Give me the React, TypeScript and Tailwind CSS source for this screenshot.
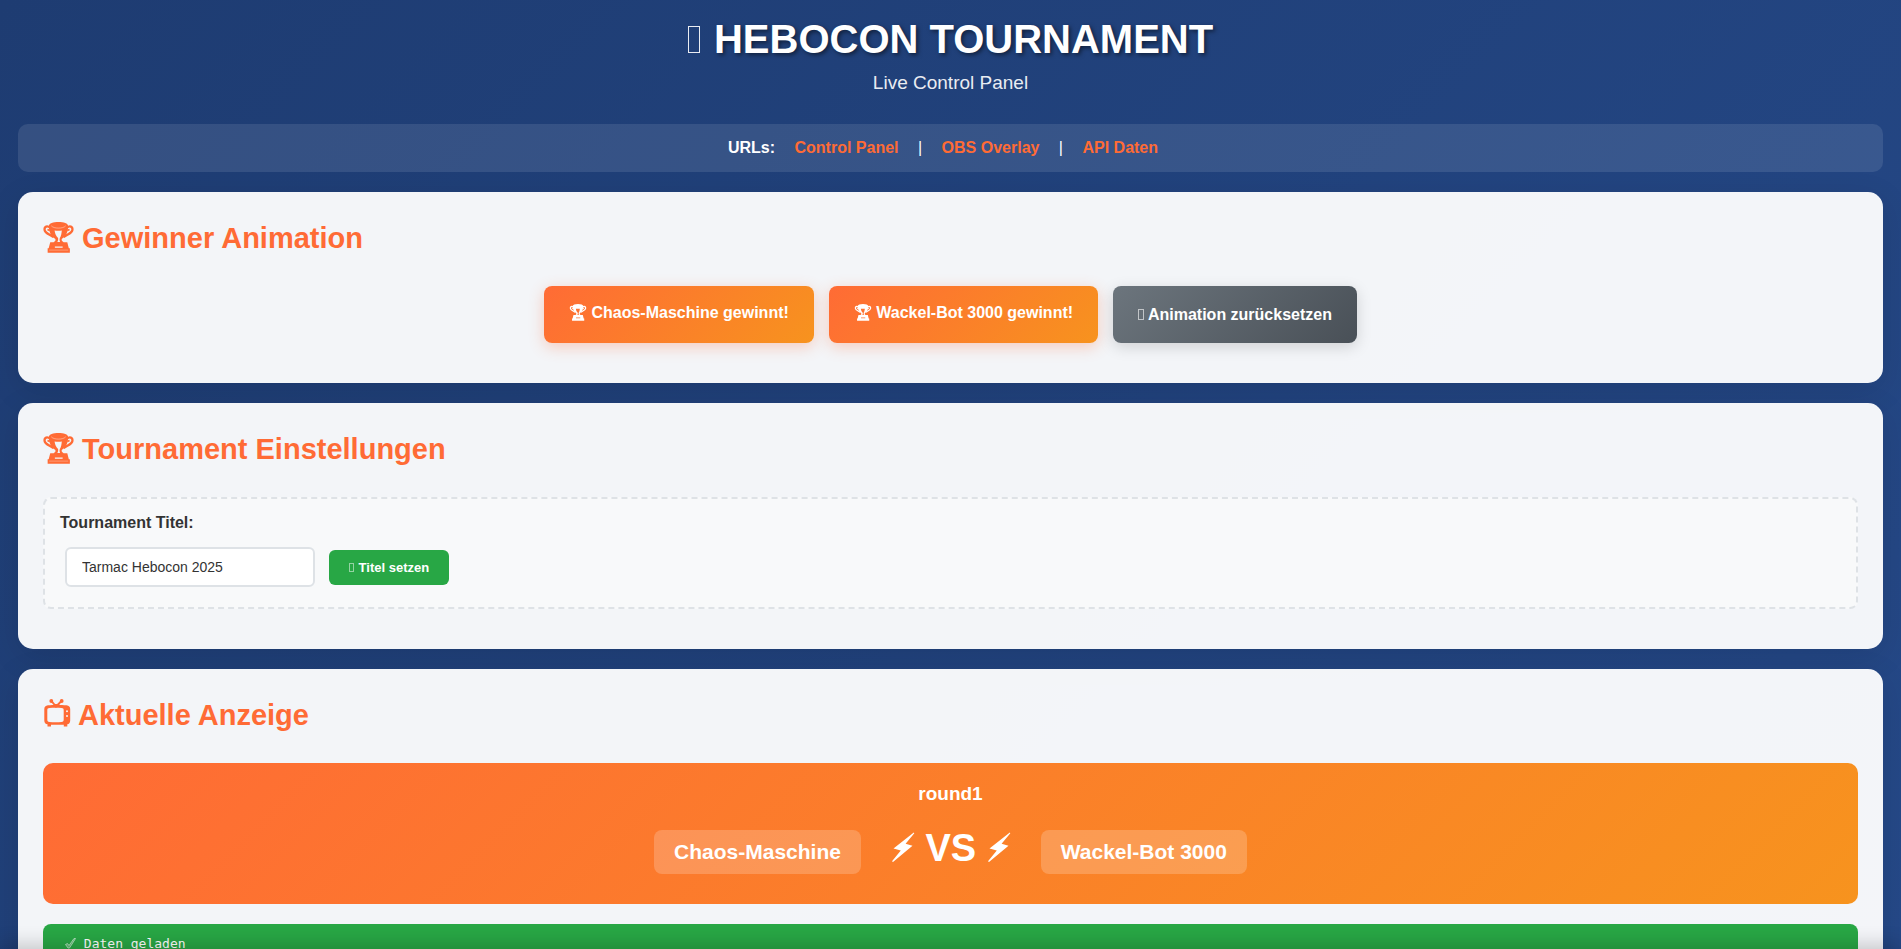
import type { ReactNode } from "react";

function TrophyIcon({ className }: { className: string }) {
  return (
    <svg viewBox="0 0 30 30" fill="none" aria-hidden="true" className={className}>
      <path
        d="M6.800 5.500C4 3.200 1.300 4.500 1.500 7.500C1.900 11 6 11.700 10 14.500M23.200 5.500C26 3.200 28.700 4.500 28.500 7.500C28.100 11 24 11.700 20 14.500"
        stroke="currentColor"
        strokeWidth="2.200"
      />
      <path d="M4.300 7.300L6.500 8.300M25.700 7.300L23.500 8.300" stroke="currentColor" strokeWidth="1.600" />
      <path
        fillRule="evenodd"
        fill="currentColor"
        d="M15 0C20 0 24.300 1.300 24.300 3.600C24.300 9.500 22.600 13.500 18.300 16.200C17.700 17.300 18 18.300 20 19.500H23.500L25 25.500H26V29.700H4.500V25.500H5.500L7 19.500H10.300C12.300 18.300 12.500 17.300 11.700 16.200C7.400 13.500 5.700 9.500 5.700 3.600C5.700 1.300 10 0 15 0ZM11.200 8.200C11.600 11.200 12.700 13.600 14.600 15.500C14.900 17.300 14.500 18.400 13.800 19.300H16.600C15.900 18.300 15.900 16.800 16.300 15.600C17.500 13.800 17.900 11.500 18.200 8.300C16 8.700 13.300 8.700 11.200 8.200ZM11.500 23.800V25H19V23.800Z"
      />
      <path
        d="M8 3.700C9.500 5.300 12 5.900 15 5.900S20.500 5.300 22 3.700"
        stroke="#ffffff"
        strokeOpacity=".55"
        strokeWidth=".7"
      />
      <path d="M6 27.200H24.500" stroke="#ffffff" strokeOpacity=".45" strokeWidth=".7" />
    </svg>
  );
}

function TvIcon({ className }: { className: string }) {
  return (
    <svg viewBox="0 0 28 28" fill="none" aria-hidden="true" className={className}>
      <path d="M8.500 2L13 7.500L18.500 2" stroke="currentColor" strokeWidth="1.900" />
      <circle cx="8.300" cy="2" r="1.900" fill="currentColor" />
      <circle cx="18.700" cy="2" r="1.900" fill="currentColor" />
      <path d="M9.500 7L12 5H15.500L18.500 7Z" fill="currentColor" />
      <path
        fillRule="evenodd"
        fill="currentColor"
        d="M5 6.300C10 5.800 18 5.800 23.500 6.300C26 6.500 27.200 8 27.200 10V21.500C27.200 24 26 25 24.300 25.200V27.500H20.800V25.700H8V27.500H4.500V25.200C2.500 25 1.300 24 1.300 21.500V10C1.300 8 2.500 6.500 5 6.300ZM6.500 9C4.800 9.100 4.300 9.700 4.300 11.500V20.500C4.300 22.300 4.800 22.800 6.500 22.900C10 23.200 15 23.200 18.500 22.900C20.200 22.800 20.700 22.300 20.700 20.500V11.500C20.700 9.700 20.200 9.100 18.500 9C15 8.700 10 8.700 6.500 9Z"
      />
      <circle cx="24" cy="12.300" r="1" fill="#f4f5f9" />
      <circle cx="24" cy="17" r="1" fill="#f4f5f9" />
    </svg>
  );
}

function BoltIcon() {
  return (
    <svg viewBox="0 0 24 30" aria-hidden="true" className="mb-1 inline-block h-[30px] w-6 align-[-5px]">
      <path
        d="M22.800 .5L2.500 16.500L9.800 18.600L1 29.200L2 30L21.500 13.700L14.600 11.800L23.300 1.200Z"
        fill="currentColor"
      />
    </svg>
  );
}

function CheckIcon() {
  return (
    <svg viewBox="0 0 13 12" aria-hidden="true" className="inline-block h-3 w-[13px] align-[-1px] opacity-70">
      <path
        d="M2.500 7.500L4.500 6.500L6 8.500L11 1.500H12.500L6.500 11H5Z"
        fill="#ffffff"
        fillOpacity=".35"
        stroke="#ffffff"
        strokeWidth=".8"
      />
    </svg>
  );
}

/** Narrow hollow box used as a leading symbol. */
function BoxGlyph({ className }: { className: string }) {
  return <span aria-hidden="true" className={`inline-block border-current ${className}`} />;
}

function Card({ icon, title, children }: { icon: ReactNode; title: string; children: ReactNode }) {
  return (
    <section className="mb-5 rounded-[15px] bg-white/95 p-[25px] shadow-[0_8px_32px_rgba(0,0,0,0.1)]">
      <h2 className="mb-5 h-[49px] text-[29px] leading-[42px] font-bold text-[#ff6b35]">
        {icon} {title}
      </h2>
      {children}
    </section>
  );
}

function UrlLink({ href, children }: { href: string; children: ReactNode }) {
  return (
    <a href={href} className="mx-[15px] font-bold text-[#ff6b35]">
      {children}
    </a>
  );
}

function WinnerButton({ name }: { name: string }) {
  return (
    <button
      type="button"
      className="rounded-lg bg-[linear-gradient(135deg,#ff6b35,#f7931e)] px-[25px] pt-[17px] pb-5 text-base leading-5 font-bold text-white shadow-[0_4px_15px_rgba(255,107,53,0.3)]"
    >
      <TrophyIcon className="inline-block h-[17px] w-[18px] align-[-3px]" /> {name} gewinnt!
    </button>
  );
}

function RobotName({ children }: { children: ReactNode }) {
  return (
    <span className="rounded-lg bg-white/20 px-5 py-2.5 text-[21px] leading-6 font-bold">{children}</span>
  );
}

export default function App() {
  return (
    <div className="min-h-screen bg-[#2a5298] bg-[linear-gradient(135deg,#1e3c72,#2a5298)] bg-[length:100%_3000px] bg-no-repeat px-[18px] font-['Liberation_Sans',Arial,sans-serif] text-base text-[#333333]">
      <header className="pt-4 text-center text-white">
        <h1 className="text-[40px] leading-[46px] font-bold [text-shadow:2px_2px_4px_rgba(0,0,0,0.5)]">
          <BoxGlyph className="mr-[3px] h-[27px] w-3 border opacity-90" /> HEBOCON TOURNAMENT
        </h1>
        <p className="mt-2.5 text-[19px] leading-[22px] opacity-90">Live Control Panel</p>
      </header>

      <nav
        aria-label="URLs"
        className="mt-[30px] mb-5 rounded-[10px] bg-white/10 py-3 text-center leading-6 text-white"
      >
        <strong>URLs:</strong> <UrlLink href="#control">Control Panel</UrlLink> |{" "}
        <UrlLink href="#overlay">OBS Overlay</UrlLink> | <UrlLink href="#api">API Daten</UrlLink>
      </nav>

      <main>
        <Card
          icon={<TrophyIcon className="inline-block size-[31px] align-[-5px]" />}
          title="Gewinner Animation"
        >
          <div className="mb-[15px] flex flex-wrap justify-center gap-[15px]">
            <WinnerButton name="Chaos-Maschine" />
            <WinnerButton name="Wackel-Bot 3000" />
            <button
              type="button"
              className="rounded-lg bg-[linear-gradient(135deg,#6c757d,#495057)] px-[25px] text-base leading-5 font-bold text-white shadow-[0_4px_15px_rgba(0,0,0,0.15)]"
            >
              <BoxGlyph className="h-[11px] w-1.5 border opacity-60" /> Animation zurücksetzen
            </button>
          </div>
        </Card>

        <Card
          icon={<TrophyIcon className="inline-block size-[31px] align-[-5px]" />}
          title="Tournament Einstellungen"
        >
          <div className="mb-[15px] rounded-lg border-2 border-dashed border-[#dee2e6] bg-[#f8f9fa] px-[15px] pt-3.5 pb-5">
            <label htmlFor="title" className="block leading-5 font-bold">
              Tournament Titel:
            </label>
            <div className="mt-3.5 flex items-center gap-3.5 px-[5px]">
              <input
                id="title"
                type="text"
                defaultValue="Tarmac Hebocon 2025"
                className="h-10 w-[250px] rounded-md border-2 border-[#dee2e6] bg-white px-[15px] text-sm"
              />
              <button
                type="button"
                className="rounded-md bg-[#28a745] px-5 py-2.5 text-[13px] leading-[15px] font-bold text-white"
              >
                <BoxGlyph className="mr-px h-[9px] w-[5px] border opacity-50" /> Titel setzen
              </button>
            </div>
          </div>
        </Card>

        <Card icon={<TvIcon className="inline-block size-7 align-[-2px]" />} title="Aktuelle Anzeige">
          <div className="mb-5 rounded-[10px] bg-[linear-gradient(135deg,#ff6b35,#f7931e)] px-5 pt-5 pb-[30px] text-center text-white">
            <div className="mb-3 text-[19px] leading-[22px] font-bold">round1</div>
            <div className="flex items-end justify-center gap-[30px] pt-[9px]">
              <RobotName>Chaos-Maschine</RobotName>
              <span className="h-12 text-[38px] leading-[44px] font-bold">
                <BoltIcon /> VS <BoltIcon />
              </span>
              <RobotName>Wackel-Bot 3000</RobotName>
            </div>
          </div>
          <div className="rounded-lg bg-[#28a745] px-5 py-2.5 font-['DejaVu_Sans_Mono',monospace] text-[13px] leading-5 text-white">
            <CheckIcon /> Daten geladen
          </div>
        </Card>
      </main>

      <div className="fixed inset-x-0 top-full h-10 bg-black/80 shadow-[0_-4px_20px_rgba(0,0,0,0.2)]" />
    </div>
  );
}
